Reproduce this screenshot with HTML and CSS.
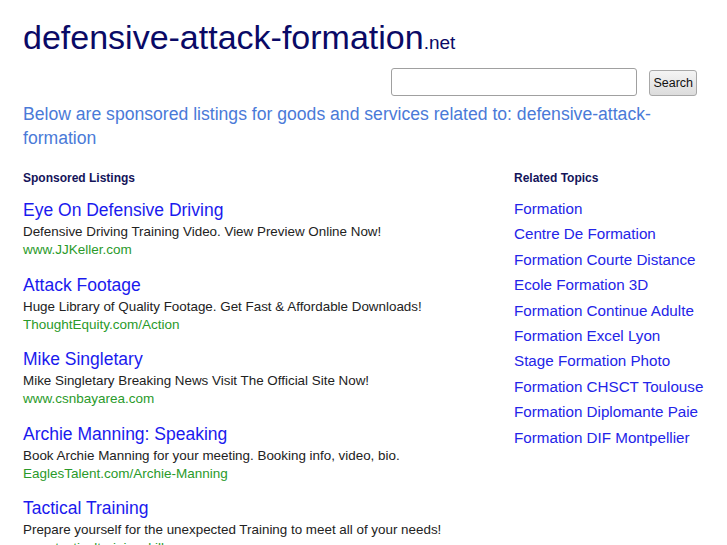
FILE: index.html
```html
<!DOCTYPE html>
<html lang="en">

<head>
  <title>defensive-attack-formation.net</title>
  <link rel="stylesheet" href="styles.css">
</head>

<body>
  <div class="page">
    <h1 class="domain">defensive-attack-formation<span class="tld">.net</span></h1>

    <form class="search-form">
      <input type="text" class="search-input">
      <button type="button" class="search-btn">Search</button>
    </form>

    <p class="intro">Below are sponsored listings for goods and services related to: defensive-attack-formation</p>

    <div class="columns">
      <div class="listings">
        <h4>Sponsored Listings</h4>

        <div class="ad">
          <a href="#" class="ad-title">Eye On Defensive Driving</a>
          <div class="ad-desc">Defensive Driving Training Video. View Preview Online Now!</div>
          <div class="ad-url">www.JJKeller.com</div>
        </div>

        <div class="ad">
          <a href="#" class="ad-title">Attack Footage</a>
          <div class="ad-desc">Huge Library of Quality Footage. Get Fast &amp; Affordable Downloads!</div>
          <div class="ad-url">ThoughtEquity.com/Action</div>
        </div>

        <div class="ad">
          <a href="#" class="ad-title">Mike Singletary</a>
          <div class="ad-desc">Mike Singletary Breaking News Visit The Official Site Now!</div>
          <div class="ad-url">www.csnbayarea.com</div>
        </div>

        <div class="ad">
          <a href="#" class="ad-title">Archie Manning: Speaking</a>
          <div class="ad-desc">Book Archie Manning for your meeting. Booking info, video, bio.</div>
          <div class="ad-url">EaglesTalent.com/Archie-Manning</div>
        </div>

        <div class="ad">
          <a href="#" class="ad-title">Tactical Training</a>
          <div class="ad-desc">Prepare yourself for the unexpected Training to meet all of your needs!</div>
          <div class="ad-url">www.tacticaltrainingskills.com</div>
        </div>
      </div>

      <div class="related">
        <h4>Related Topics</h4>
        <ul>
          <li><a href="#">Formation</a></li>
          <li><a href="#">Centre De Formation</a></li>
          <li><a href="#">Formation Courte Distance</a></li>
          <li><a href="#">Ecole Formation 3D</a></li>
          <li><a href="#">Formation Continue Adulte</a></li>
          <li><a href="#">Formation Excel Lyon</a></li>
          <li><a href="#">Stage Formation Photo</a></li>
          <li><a href="#">Formation CHSCT Toulouse</a></li>
          <li><a href="#">Formation Diplomante Paie</a></li>
          <li><a href="#">Formation DIF Montpellier</a></li>
        </ul>
      </div>
    </div>
  </div>
</body>

</html>
```

FILE: styles.css
```css
body {
  font-family: 'Liberation Sans', Arial, sans-serif;
  margin: 0;
  background-color: #ffffff;
}

.page {
  padding: 16px 0 0 23px;
}

.domain {
  color: #0a0a66;
  font-size: 34px;
  font-weight: normal;
  margin: 0;
  line-height: 42px;
}

.tld {
  font-size: 19px;
}

.search-form {
  display: flex;
  justify-content: flex-end;
  align-items: center;
  gap: 12px;
  padding-right: 30px;
  margin-top: 3px;
}

.search-input {
  width: 240px;
  height: 22px;
  border: 1px solid #a0a0a0;
  border-radius: 3px;
  padding: 2px;
}

.search-btn {
  font-family: 'Liberation Sans', Arial, sans-serif;
  font-size: 12.5px;
  height: 26px;
  padding: 0 3px;
  border: 1px solid #a8a8a8;
  border-radius: 3px;
  background: linear-gradient(#f4f4f4, #dcdcdc);
  color: #111;
  margin-top: 3px;
}

.intro {
  color: #4a7ad8;
  font-size: 17.6px;
  line-height: 24px;
  margin: 6px 0 0 0;
  width: 660px;
}

.columns {
  display: flex;
  margin-top: 21px;
}

.listings {
  width: 491px;
}

h4 {
  color: #14145a;
  font-size: 12px;
  line-height: 14px;
  font-weight: bold;
  margin: 0 0 13px 0;
}

.related h4 {
  margin-bottom: 11px;
}

.ad {
  margin-bottom: 14.5px;
}

.ad-title {
  color: #1a1aee;
  font-size: 17.5px;
  line-height: 24px;
  text-decoration: none;
}

.ad-desc {
  color: #222222;
  font-size: 13.4px;
  line-height: 20px;
}

.ad-url {
  color: #2a9a2a;
  font-size: 13.5px;
  line-height: 16px;
}

.related ul {
  list-style: none;
  margin: 0;
  padding: 0;
}

.related li {
  font-size: 15.2px;
  line-height: 25.4px;
}

.related a {
  color: #2424e8;
  text-decoration: none;
}
```
